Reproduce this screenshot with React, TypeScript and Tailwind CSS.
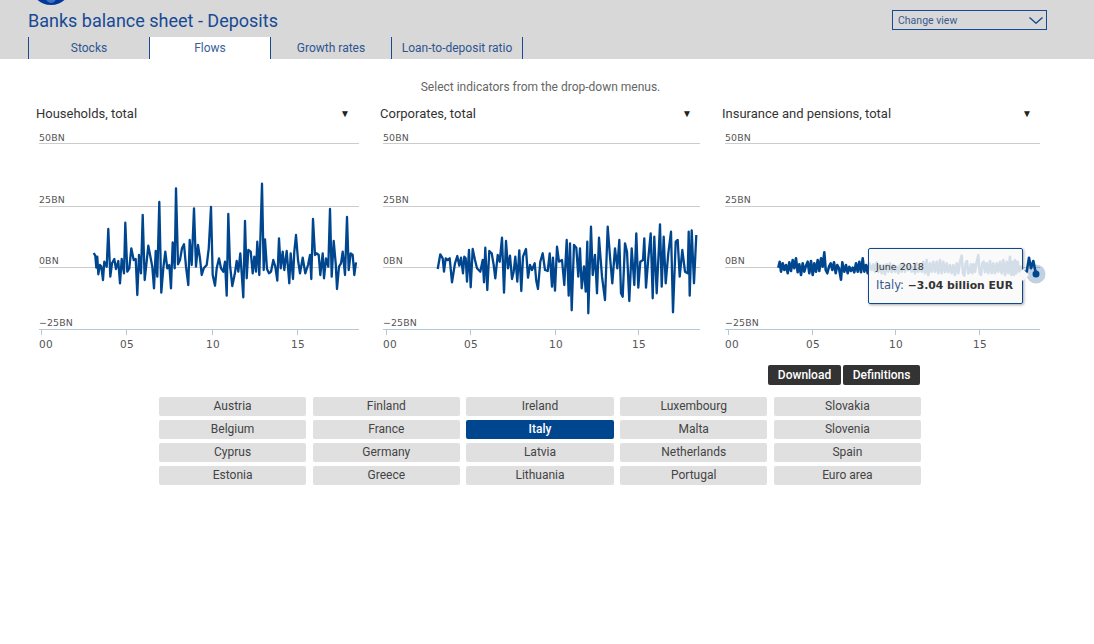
const roboto = "font-['Roboto',sans-serif]"

const tabs = ['Stocks', 'Flows', 'Growth rates', 'Loan-to-deposit ratio']

const countries = [
  'Austria', 'Belgium', 'Cyprus', 'Estonia',
  'Finland', 'France', 'Germany', 'Greece',
  'Ireland', 'Italy', 'Latvia', 'Lithuania',
  'Luxembourg', 'Malta', 'Netherlands', 'Portugal',
  'Slovakia', 'Slovenia', 'Spain', 'Euro area',
]

// traced off the reference, in pixels of a 3x crop
const householdsTrace =
  '221,384 226,392 229,428 232,395 235,448 240,420 244,424 249,465 253,410 260,425 265,312 271,455 276,415 283,402 288,432 295,408 300,475 305,402 312,445 316,293 322,440 328,430 334,370 341,405 347,402 352,510 357,390 363,445 368,270 374,465 379,420 385,362 392,400 397,425 402,490 407,378 412,455 418,231 424,503 430,430 436,380 442,430 448,420 453,490 458,352 464,430 468,190 474,418 480,405 486,370 492,358 498,425 505,480 509,345 515,420 522,250 528,425 534,360 540,400 545,450 551,430 560,420 566,372 573,246 578,450 585,482 590,430 597,400 603,430 610,440 615,410 620,512 625,267 630,420 637,483 644,448 650,408 655,440 661,385 665,445 670,517 675,288 680,460 685,375 692,380 698,445 703,395 708,440 712,350 718,450 726,176 731,435 735,343 741,432 747,445 753,440 760,405 766,425 772,467 777,340 782,430 788,380 793,435 800,378 808,475 812,385 819,462 823,380 828,330 834,405 840,445 848,398 856,445 864,420 870,390 874,462 879,282 885,390 890,385 896,390 901,450 908,385 912,460 918,400 925,425 930,252 935,455 941,348 947,415 951,492 957,425 963,415 968,380 975,450 981,276 986,435 992,385 998,390 1003,450 1008,412'

const corporatesTrace =
  '188,432 196,388 203,400 207,440 212,400 218,405 224,400 231,472 240,415 247,393 253,422 258,398 264,445 268,395 272,400 276,470 282,375 287,487 293,372 300,405 306,430 316,440 323,405 327,472 331,368 337,495 343,378 350,385 356,420 361,460 368,390 374,410 381,338 387,503 393,348 399,430 405,392 411,462 416,440 421,395 427,470 433,376 439,498 444,395 453,372 459,458 465,420 471,435 479,415 484,468 489,492 496,410 503,385 510,435 518,438 524,385 531,485 534,398 540,497 546,365 552,410 561,405 568,480 575,345 581,512 585,355 590,556 597,360 604,368 610,455 615,370 620,490 627,424 632,500 637,350 640,565 648,305 653,450 660,390 666,505 672,338 681,455 690,525 698,305 705,395 712,475 720,370 727,430 733,345 738,505 743,515 750,355 756,380 763,528 770,370 778,480 784,325 790,488 796,410 804,405 808,340 813,488 820,400 827,325 833,520 838,335 845,505 855,298 860,485 866,335 872,475 880,385 888,320 894,562 902,350 908,345 914,455 922,375 930,440 938,445 941,320 944,512 950,316 957,475 964,330'

const insuranceTrace =
  '190,428 194,410 198,440 203,415 208,435 213,420 218,445 223,412 228,438 233,405 238,430 243,400 248,442 253,418 258,450 263,415 268,440 273,422 278,410 283,445 288,408 293,450 298,415 303,440 308,405 313,438 318,400 323,425 328,382 332,435 337,445 342,425 347,415 352,435 357,412 362,445 367,420 372,430 378,464 382,412 388,440 393,420 398,445 403,425 408,438 413,428 418,442 423,415 428,440 433,410 438,442 443,400 448,440 453,420 458,445 463,415 470,435 475,418 480,440 485,412 490,440 495,420 500,445 505,420 510,448 515,418 520,440 525,415 530,442 535,420 540,440 545,425 550,445 555,420 560,440 565,415 570,440 575,420 580,435 585,420 590,440 595,425 600,445 605,415 610,440 615,420 620,440 625,410 630,445 635,405 640,450 645,415 650,440 655,410 660,440 665,410 670,445 675,405 680,445 685,410 690,442 695,415 700,442 705,420 710,445 715,420 720,450 725,415 730,445 735,410 740,392 744,445 748,452 752,415 756,408 760,445 764,440 768,418 772,445 776,418 780,440 785,412 790,390 794,445 798,450 802,415 806,410 810,442 815,415 820,445 825,408 830,445 835,415 840,445 845,415 850,440 855,410 860,445 865,405 870,450 875,410 880,445 885,395 889,450 893,410 897,450 900,405 904,445 908,410 913,440 918,425 923,445 928,440 935,440 942,398 948,430 955,408 963,447'

function tracePoints(trace: string, cropX: number, left: number) {
  return trace
    .split(' ')
    .map((p) => {
      const [x, y] = p.split(',').map(Number)
      return `${(x / 3 + cropX - left).toFixed(1)},${(y / 3 + 125 - 130).toFixed(1)}`
    })
    .join(' ')
}

const rows = [
  { label: '50BN', y: 13, textY: 11, color: '#cccccc' },
  { label: '25BN', y: 76, textY: 73, color: '#cccccc' },
  { label: '0BN', y: 137, textY: 134, color: '#cccccc' },
  { label: '−25BN', y: 199, textY: 196, color: '#b5c6d6' },
]

interface ChartProps {
  width: number
  ticks: number[]
  points: string
  lineWidth: number
  marker?: boolean
}

function Chart({ width, ticks, points, lineWidth, marker }: ChartProps) {
  return (
    <svg width={330} height={225} className="ml-[3px] mt-[6px] block overflow-visible">
      {rows.map((r) => (
        <g key={r.label}>
          <line x1={0} x2={width} y1={r.y + 0.5} y2={r.y + 0.5} stroke={r.color} />
          <text x={0} y={r.textY} fontSize={9.4} letterSpacing={0.15} fill="#555" fontFamily="'DejaVu Sans',sans-serif">
            {r.label}
          </text>
        </g>
      ))}
      {ticks.map((t, i) => (
        <g key={t}>
          <line x1={t + 0.5} x2={t + 0.5} y1={199} y2={205} stroke="#b5c6d6" />
          <text
            x={i === 0 ? 7 : t + 1}
            y={218}
            textAnchor="middle"
            fontSize={10.5}
            letterSpacing={0.3}
            fill="#555"
            fontFamily="'DejaVu Sans',sans-serif"
          >
            {['00', '05', '10', '15'][i]}
          </text>
        </g>
      ))}
      <polyline points={points} fill="none" stroke="#00468f" strokeWidth={lineWidth} strokeLinejoin="round" />
      {marker && (
        <>
          <circle cx={311} cy={144} r={9.5} fill="#00468f" fillOpacity={0.25} />
          <circle cx={311} cy={144} r={3.5} fill="#00468f" />
        </>
      )}
    </svg>
  )
}

function Indicator({ label, arrowOffset }: { label: string; arrowOffset: number }) {
  return (
    <div className={`${roboto} flex h-5 items-center text-[13px] text-[#333]`}>
      <span style={{ width: arrowOffset }}>{label}</span>
      <span className="text-[10px] leading-none text-[#222]">▼</span>
    </div>
  )
}

export default function App() {
  return (
    <div className={`${roboto} h-[644px] w-[1094px] overflow-hidden bg-white`}>
      {/* header */}
      <header className="relative h-[59px] bg-[#d8d8d8]">
        <svg width={30} height={6} className="ml-[36px] block">
          <circle cx={15} cy={-15.5} r={20.5} fill="#00379a" />
          <circle cx={15} cy={-2} r={5} fill="#3f6fc0" />
        </svg>
        <h1 className="ml-[28px] mt-[4px] h-[22px] text-[18px] leading-[22px] text-[#174a94]">
          Banks balance sheet - Deposits
        </h1>
        <nav className="ml-[28px] mt-[5px] flex h-[22px] w-fit border-r border-[#174a94]">
          {tabs.map((t, i) => (
            <div
              key={t}
              className={`flex h-[22px] items-center justify-center border-l border-[#174a94] text-[12px] ${
                i === 3 ? 'w-[131px]' : 'w-[121px]'
              } ${t === 'Flows' ? 'bg-white text-[#3a5f9a]' : 'text-[#2f5590]'}`}
            >
              {t}
            </div>
          ))}
        </nav>
        <div className="absolute left-[892px] top-[10px] flex h-5 w-[155px] items-center justify-between border border-[#174a94] pl-[5px] pr-[3px] text-[10.5px] text-[#3a5a8f]">
          <span className="pt-px">Change view</span>
          <svg width={14} height={7} viewBox="0 0 14 7" fill="none" stroke="#174a94" strokeWidth={1.4}>
            <path d="M0.5 0.5 L7 6.2 L13.5 0.5" />
          </svg>
        </div>
      </header>

      <p className="mt-[20px] h-4 pr-[13px] text-center text-[12px] leading-4 text-[#666]">
        Select indicators from the drop-down menus.
      </p>

      {/* charts */}
      <div className="ml-[36px] mt-[9px] flex">
        <div className="w-[344px]">
          <Indicator label="Households, total" arrowOffset={304} />
          <Chart width={320} ticks={[2, 87, 173, 258]} lineWidth={2.3} points={tracePoints(householdsTrace, 20, 39)} />
        </div>
        <div className="w-[342px]">
          <Indicator label="Corporates, total" arrowOffset={302} />
          <Chart width={317} ticks={[3, 87, 172, 255]} lineWidth={2.3} points={tracePoints(corporatesTrace, 375, 383)} />
        </div>
        <div className="relative w-[330px]">
          <Indicator label="Insurance and pensions, total" arrowOffset={300} />
          <Chart width={315} ticks={[3, 87, 170, 254]} lineWidth={2.6} points={tracePoints(insuranceTrace, 715, 725)} marker />
          {/* tooltip */}
          <div className="absolute left-[146px] top-[144px] flex h-[56px] w-[155px] flex-col rounded-[2px] border border-[#0b4a90] bg-[#f9f9f9]/85 pl-[7px] pt-[11px] font-['DejaVu_Sans',sans-serif] shadow-[1px_1px_3px_rgba(0,0,0,0.35)]">
            <span className="text-[9.5px] leading-[13px] text-[#333]">June 2018</span>
            <span className="mt-[5px] whitespace-nowrap text-[11.5px] leading-[14px] text-[#3b5a8f]">
              Italy: <b className="text-[10.8px] text-[#333]">−3.04 billion EUR</b>
            </span>
            <span className="absolute right-[-5px] top-[22px] h-2 w-2 rotate-45 border-r border-t border-[#f9f9f9] bg-[#f9f9f9]" />
          </div>
        </div>
      </div>

      {/* actions and country picker */}
      <div className="ml-[159px] mt-[10px] w-[762px]">
        <div className="flex justify-end gap-[2px] pr-px">
          <button className="h-5 w-[73px] rounded-[2px] bg-[#333] text-[12px] font-medium text-white">Download</button>
          <button className="h-5 w-[77px] rounded-[2px] bg-[#333] text-[12px] font-medium text-white">Definitions</button>
        </div>
        <div className="mt-[12px] grid grid-flow-col grid-cols-5 grid-rows-4 gap-x-[6.5px] gap-y-1">
          {countries.map((c) => (
            <div
              key={c}
              className={`flex h-[19px] items-center justify-center rounded-[2px] pb-px text-[12px] ${
                c === 'Italy' ? 'bg-[#00468f] font-medium text-white' : 'bg-[#e0e0e0] text-[#444]'
              }`}
            >
              {c}
            </div>
          ))}
        </div>
      </div>
    </div>
  )
}
